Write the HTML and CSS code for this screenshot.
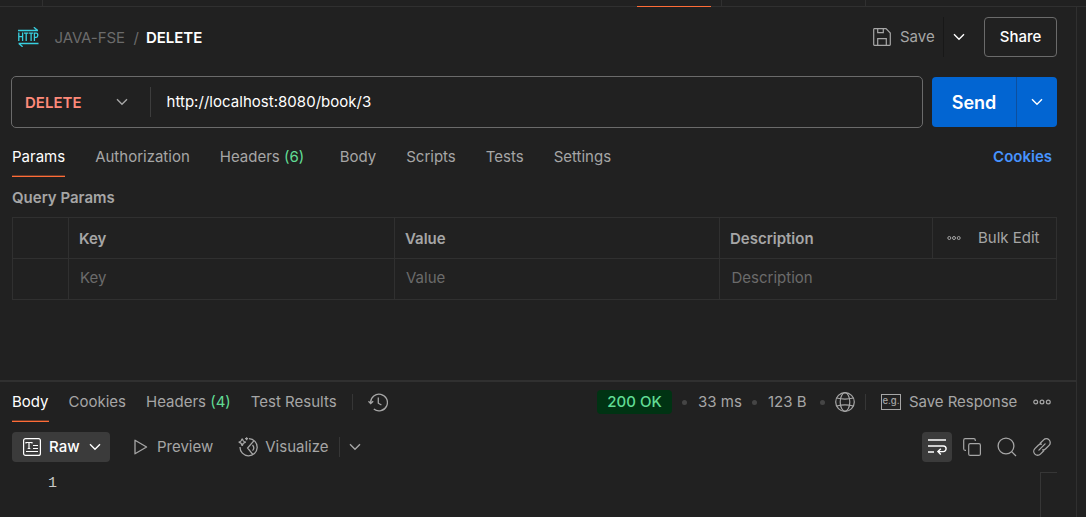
FILE: index.html
```html
<!DOCTYPE html>
<html lang="en">
<head>
<meta charset="utf-8">
<title>DELETE – JAVA-FSE</title>
<link rel="stylesheet" href="styles.css">
</head>
<body>
<div class="app">
  <div class="tabstrip">
    <span class="strip-tab strip-first"></span>
    <span class="strip-tab strip-wide"><i class="strip-active"></i></span>
    <span class="strip-tab strip-next"></span>
  </div>
  <div class="workspace">
    <main class="main">
      <header class="header">
        <svg class="http" width="21" height="20" viewBox="0 0 21 20" fill="none" stroke="#38d0e0" stroke-width="1.3">
          <path d="M0 3.5H20M15.8.2 19.8 3.5M20.5 16.5H.6M4.6 19.8.8 16.5"/>
          <path d="M.8 5.6V14M4.6 5.6V14M.8 9.7H4.6M6 6.2H10.4M8.2 6.2V14M11 6.2H15.2M13.1 6.2V14M16.4 14V6.2H18.2Q19.8 6.2 19.8 8.2T18.2 10.3H16.4"/>
        </svg>
        <span class="collection">JAVA-FSE</span>
        <span class="slash">/</span>
        <span class="name">DELETE</span>
        <button class="save">
          <svg width="18" height="18" viewBox="0 0 18 18" fill="none" stroke="#a6a6a6" stroke-width="1.2">
            <path d="M1.2.7H13L17.3 5V16.6Q17.3 17.3 16.6 17.3H1.4Q.7 17.3.7 16.6V1.4Q.7.7 1.2.7ZM4.7.7V4.6H10.3V.7M4.7 17V10.7H13.3V17"/>
          </svg>Save
        </button>
        <button class="save-more"><svg class="chev white" width="12" height="8" viewBox="0 0 12 8"><path d="M1 1.2 6 6.2 11 1.2"/></svg></button>
        <button class="share">Share</button>
      </header>

      <div class="request">
        <div class="urlbar">
          <span class="method">DELETE</span>
          <svg class="chev" width="12" height="8" viewBox="0 0 12 8"><path d="M1 1.2 6 6.2 11 1.2"/></svg>
          <span class="url">http://localhost:8080/book/3</span>
        </div>
        <div class="send">
          <button class="send-main">Send</button>
          <button class="send-more"><svg class="chev white" width="12" height="8" viewBox="0 0 12 8"><path d="M1 1.2 6 6.2 11 1.2"/></svg></button>
        </div>
      </div>

      <nav class="tabs">
        <a class="tab active">Params</a>
        <a class="tab">Authorization</a>
        <a class="tab counted">Headers <b>(6)</b></a>
        <a class="tab">Body</a>
        <a class="tab">Scripts</a>
        <a class="tab">Tests</a>
        <a class="tab">Settings</a>
        <a class="cookies">Cookies</a>
      </nav>

      <h2 class="section">Query Params</h2>
      <div class="params">
        <div class="cell"></div>
        <div class="cell head">Key</div>
        <div class="cell head">Value</div>
        <div class="cell head">Description</div>
        <div class="cell bulk">
          <svg width="14" height="6" viewBox="0 0 14 6" fill="none" stroke="#a6a6a6"><circle cx="2.3" cy="3" r="1.5"/><circle cx="7" cy="3" r="1.5"/><circle cx="11.7" cy="3" r="1.5"/></svg>
          Bulk Edit
        </div>
        <div class="cell"></div>
        <div class="cell hint">Key</div>
        <div class="cell hint">Value</div>
        <div class="cell hint span">Description</div>
      </div>

      <section class="response">
        <div class="res-tabs">
          <a class="tab active">Body</a>
          <a class="tab">Cookies</a>
          <a class="tab">Headers <b>(4)</b></a>
          <a class="tab">Test Results</a>
          <i class="rule"></i>
          <svg class="history" width="20" height="19" viewBox="0 0 20 19" fill="none" stroke="#a6a6a6" stroke-width="1.3">
            <path d="M2.6 10.5V9.5A8.4 8.4 0 1 1 5.8 16.1M.5 8.3 2.7 10.6 5.2 8.3M10.3 4.5V10.2L13.4 12"/>
          </svg>
          <div class="meta">
            <span class="status">200 OK</span>
            <i class="dot"></i><span class="time">33 ms</span>
            <i class="dot"></i><span class="size">123 B</span>
            <i class="dot"></i>
            <svg class="globe" width="20" height="20" viewBox="0 0 20 20" fill="none" stroke="#a6a6a6" stroke-width="1.2">
              <circle cx="10" cy="10" r="9.3"/><ellipse cx="10" cy="10" rx="4.8" ry="9.3"/><path d="M1.7 6Q10 8.2 18.3 6M1.7 14Q10 11.8 18.3 14"/>
            </svg>
            <i class="rule"></i>
            <span class="eg">e.g.</span>
            <span class="save-res">Save Response</span>
            <svg class="more" width="18" height="6" viewBox="0 0 18 6" fill="none" stroke="#a6a6a6" stroke-width="1.2"><circle cx="2.7" cy="3" r="1.9"/><circle cx="9" cy="3" r="1.9"/><circle cx="15.3" cy="3" r="1.9"/></svg>
          </div>
        </div>

        <div class="toolbar">
          <button class="raw">
            <svg width="18" height="18" viewBox="0 0 18 18" fill="none" stroke="#fff" stroke-width="1.2">
              <rect x=".6" y=".6" width="16.8" height="16.8" rx="2"/><path d="M3 5.5V4.5H9V5.5M6 4.5V10.5M4.7 10.5H7.3M10 7.5H15M10 10.5H15M3 13.5H15"/>
            </svg>
            <span>Raw</span>
            <svg class="chev white" width="12" height="8" viewBox="0 0 12 8"><path d="M1 1.2 6 6.2 11 1.2"/></svg>
          </button>
          <button class="preview">
            <svg width="14" height="16" viewBox="0 0 14 16" fill="none" stroke="#a6a6a6" stroke-width="1.3" stroke-linejoin="round"><path d="M1 1.2 12.6 8 1 14.8Z"/></svg>
            Preview
          </button>
          <button class="visualize">
            <svg width="20" height="20" viewBox="0 0 20 20" fill="none" stroke="#a6a6a6" stroke-width="1.3">
              <path d="M11 1.6A8.6 8.6 0 1 1 2 10M15.8 3.8 9.6 11 14.7 17.4M14.5 8Q17.1 11 14.5 13.6M4.2 1.5Q4.7 4.6 7.8 5.2 4.7 5.8 4.2 8.8 3.6 5.8.7 5.2 3.6 4.6 4.2 1.5ZM8.6.2V3.3M7 1.7H10.1"/>
            </svg>
            Visualize
          </button>
          <i class="rule"></i>
          <svg class="chev" width="12" height="8" viewBox="0 0 12 8"><path d="M1 1.2 6 6.2 11 1.2"/></svg>
          <div class="tools">
            <button class="wrap"><svg width="20" height="18" viewBox="0 0 20 18" fill="none" stroke="#fff" stroke-width="1.4"><path d="M1 2H19M1 8H16.3A2.8 2.8 0 0 1 16.3 13.6H11M13.8 10.7 10.9 13.6 13.8 16.5M1 14H7"/></svg></button>
            <svg width="18" height="18" viewBox="0 0 18 18" fill="none" stroke="#a6a6a6" stroke-width="1.2"><rect x="5.7" y="5.7" width="11.7" height="11.7" rx="1.5"/><path d="M3 12.3H2.2Q.7 12.3.7 10.8V2.2Q.7.7 2.2.7H10.8Q12.3.7 12.3 2.2V3"/></svg>
            <svg width="20" height="20" viewBox="0 0 20 20" fill="none" stroke="#a6a6a6" stroke-width="1.3"><circle cx="9" cy="9" r="7.9"/><path d="M14.6 14.6 19 19"/></svg>
            <svg width="18" height="18" viewBox="0 0 18 18" fill="none" stroke="#a6a6a6" stroke-width="1.3" stroke-linecap="round"><path d="M7.2 5.3 10.6 1.9A3.7 3.7 0 0 1 16.1 7.4L12.7 10.8Q11.4 12.1 9.6 11.9M10.8 12.7 7.4 16.1A3.7 3.7 0 0 1 1.9 10.6L5.3 7.2Q6.6 5.9 8.4 6.1M5.9 12.1 12.1 5.9"/></svg>
          </div>
        </div>
        <div class="editor"><span class="line">1</span><span class="minimap"></span></div>
      </section>
    </main>
    <aside class="rail"></aside>
  </div>
</div>
</body>
</html>
```
FILE: styles.css
```css
* { box-sizing: border-box; }
body { margin: 0; background: #212121; color: #a6a6a6; font: 15px/20px Inter, "Liberation Sans", sans-serif; }
button { border: 0; padding: 0; background: none; color: inherit; font: inherit; }
svg, i, span { flex: none; }
svg { display: block; }
.app { width: 1086px; height: 517px; display: flex; flex-direction: column; overflow: hidden; white-space: nowrap; }
.chev { fill: none; stroke: #a6a6a6; stroke-width: 1.4; }
.chev.white { stroke: #fff; }
.rule { width: 1px; height: 16px; background: #363636; }

.tabstrip { height: 7px; flex: none; display: flex; border-bottom: 1px solid #303030; }
.strip-tab { height: 6px; border-right: 1px solid #303030; }
.strip-first { width: 43px; }
.strip-wide { width: 679px; display: flex; justify-content: flex-end; padding-right: 10px; }
.strip-active { width: 74px; height: 1px; margin-top: 6px; background: #ff6c37; }
.strip-next { width: 144px; }
.workspace { flex: 1; display: flex; min-height: 0; }
.main { width: 1076px; display: flex; flex-direction: column; }
.rail { width: 10px; border-left: 1px solid #303030; }

.header { height: 60px; flex: none; display: flex; align-items: center; padding: 0 19px 0 18px; }
.collection { margin-left: 15.5px; width: 79px; padding-top: 2px; color: #6b6b6b; letter-spacing: -.1px; }
.slash { width: 12.5px; padding-top: 2px; color: #6b6b6b; }
.name { padding-top: 2px; color: #fff; font-weight: 600; letter-spacing: -.05px; }
.save { margin-left: auto; display: flex; align-items: center; gap: 9px; width: 70px; }
.save-more { width: 32px; height: 40px; margin-right: 9px; padding-right: 2px; border-left: 1px solid #181818; display: flex; align-items: center; justify-content: center; }
.share { width: 73px; height: 40px; border: 1px solid #6b6b6b; border-radius: 4px; color: #fff; font-weight: 500; }

.request { height: 52px; margin: 9px 19px 0 11px; flex: none; display: flex; align-items: center; justify-content: space-between; }
.urlbar { width: 912px; height: 52px; border: 1px solid #6b6b6b; border-radius: 5px; display: flex; align-items: center; padding-left: 13px; }
.method { width: 91px; padding-top: 2px; color: #ff8a7a; font-weight: 600; }
.url { margin-left: 22px; padding-left: 15.5px; line-height: 30px; border-left: 1px solid #3d3d3d; color: #fff; letter-spacing: .03px; }
.send { width: 125px; height: 50px; display: flex; background: #0265d2; border-radius: 4px; color: #fff; }
.send-main { width: 84px; padding-top: 2px; font-size: 18px; font-weight: 600; }
.send-more { width: 41px; border-left: 1px solid #0d4f9e; display: flex; align-items: center; justify-content: center; }

.tabs { height: 42px; flex: none; margin: 7px 24px 0 12px; display: flex; align-items: flex-end; gap: 30px; }
.tab { height: 30px; border-bottom: 1px solid transparent; }
.tab b { color: #61dd95; font-weight: 400; }
.tab.active { color: #fff; border-color: #ff6c37; box-shadow: inset 0 -1px #6b3a28; }
.counted { margin-right: 5.5px; }
.cookies { height: 30px; margin-left: auto; color: #4793ff; font-weight: 600; }
.section { margin: 11px 0 9px 12px; font-size: 15px; line-height: 20px; font-weight: 600; }
.params { width: 1045px; margin-left: 12px; flex: none; display: grid; grid-template-columns: 56px 326px 325px 213px 124px; grid-template-rows: 41px 41px; border: solid #303030; border-width: 1px 0 0 1px; }
.cell { border: solid #303030; border-width: 0 1px 1px 0; padding: 11px 0 0 10px; }
.cell.head { font-weight: 600; }
.cell.hint { color: #6b6b6b; padding: 9px 0 0 11px; }
.cell.span { grid-column: span 2; padding-left: 11.5px; }
.cell.bulk { display: flex; align-items: center; gap: 17.5px; padding: 0 0 1px 13.5px; }

.response { margin-top: 80px; border-top: 2px solid #303030; flex: 1; display: flex; flex-direction: column; }
.res-tabs { height: 40px; flex: none; margin: 0 25px 0 12px; display: flex; align-items: center; }
.res-tabs > .tab { height: 40px; padding-top: 10px; margin-right: 20px; }
.res-tabs > .rule { margin: 0 15px 0 -5px; }
.meta { margin-left: auto; display: flex; align-items: center; }
.status { width: 75px; height: 24px; border-radius: 4px; background: #003313; color: #61dd95; font-weight: 500; line-height: 24px; text-align: center; margin-right: 10px; }
.dot { width: 5px; height: 5px; border-radius: 50%; background: #454545; }
.time { width: 56px; padding-left: 11px; margin-right: 9px; }
.size { width: 54px; padding-left: 11px; margin-right: 9px; }
.globe { margin: 0 10px; }
.eg { width: 20px; height: 16px; margin: 0 8px 0 15px; border: 1px solid #a6a6a6; font-size: 9.5px; font-weight: 500; line-height: 12px; text-align: center; }
.save-res { width: 124px; letter-spacing: -.04px; }

.toolbar { height: 30px; flex: none; margin: 10px 25px 0 12px; display: flex; align-items: center; }
.raw { width: 98px; height: 30px; border-radius: 4px; background: #3b3b3b; color: #fff; font-weight: 500; display: flex; align-items: center; padding-left: 11px; text-align: left; }
.raw span { width: 40px; margin-left: 8px; }
.preview { margin-left: 24px; display: flex; align-items: center; gap: 9px; }
.visualize { margin-left: 25px; display: flex; align-items: center; gap: 7px; }
.toolbar > .rule { height: 20px; margin: 0 9px 0 10px; }
.tools { margin-left: auto; display: flex; align-items: center; gap: 16px; }
.wrap { width: 30px; height: 30px; margin-right: -5px; border-radius: 4px; background: #3b3b3b; display: flex; align-items: center; justify-content: center; }
.editor { flex: 1; margin-top: 10px; display: flex; justify-content: space-between; padding: 0 19px 0 48px; }
.line { padding-top: 1px; font: 15px/22px "Liberation Mono", monospace; color: #c8c8c8; }
.minimap { width: 17px; border: solid #363636; border-width: 1px 0 0 1px; }
```
